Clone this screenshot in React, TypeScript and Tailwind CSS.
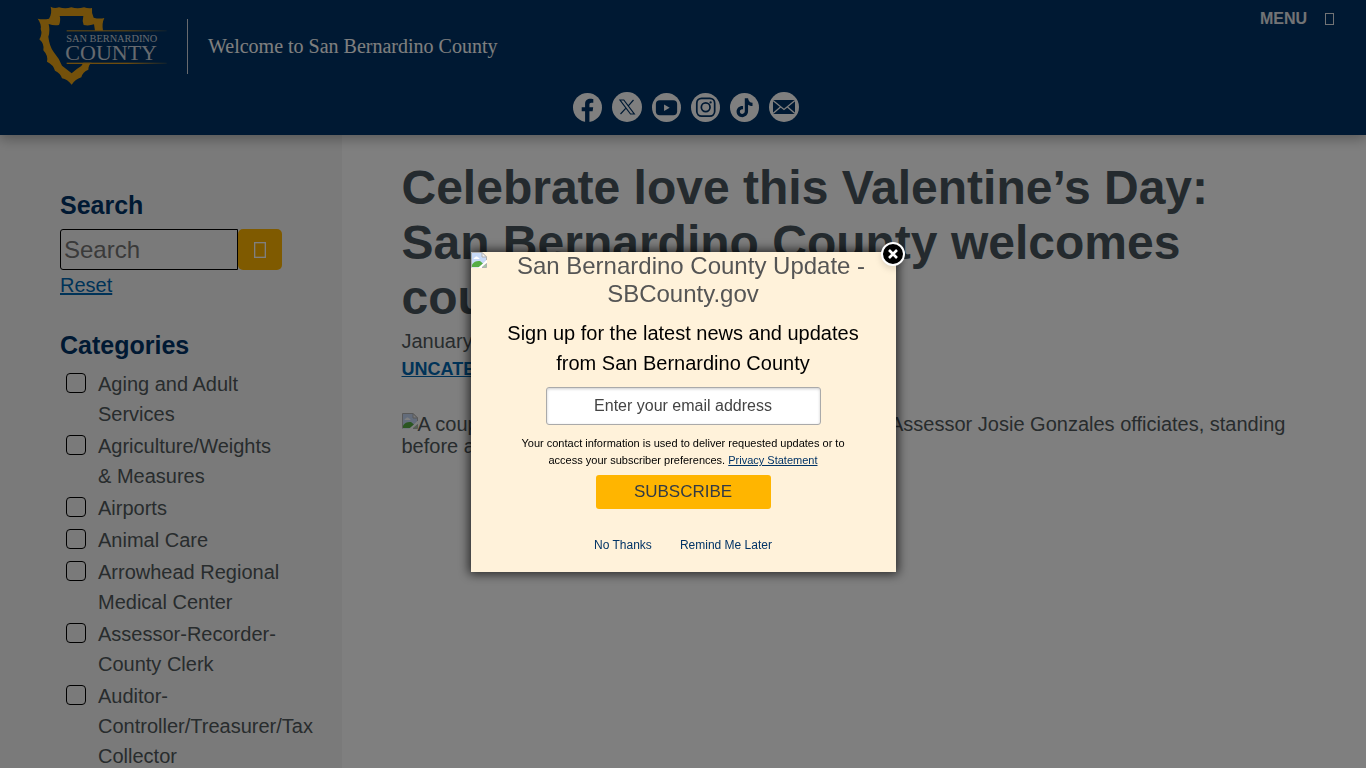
import React, { useState } from "react";

const categories = [
  "Aging and Adult Services",
  "Agriculture/Weights & Measures",
  "Airports",
  "Animal Care",
  "Arrowhead Regional Medical Center",
  "Assessor-Recorder-County Clerk",
  "Auditor-Controller/Treasurer/Tax Collector",
];

function CountyLogo() {
  return (
    <svg viewBox="48 15 396 246" className="w-[132px] h-[82px]" role="img" aria-label="San Bernardino County">
      <defs>
        <linearGradient id="rule" x1="0" x2="1" y1="0" y2="0">
          <stop offset="0.6" stopColor="#dc9a1e" />
          <stop offset="1" stopColor="#dc9a1e" stopOpacity="0.15" />
        </linearGradient>
      </defs>
      <path
        fill="#e8a317"
        d="M92 20Q103 27 117 22Q136 28 154 22Q173 28 192 22Q205 26 216 24Q214 38 221 53Q238 58 253 54Q245 70 249 92H225L222 73Q207 78 191 75Q186 62 190 48H119Q123 60 117 75Q102 78 86 72Q91 92 85 110Q88 138 101 156Q118 176 126 197Q138 206 155 220Q170 206 184 198L190 188H215Q205 194 205 209Q188 215 184 232Q166 238 155 254Q142 238 126 235Q122 220 105 212Q100 194 81 185Q85 167 70 151Q74 132 58 118Q68 102 62 87Q65 72 53 56Q70 59 87 56Q97 40 92 20Z"
      />
      <rect x="140" y="91" width="300" height="3" fill="url(#rule)" />
      <rect x="140" y="188" width="300" height="4" fill="url(#rule)" />
      <text x="139" y="126" fontSize="31" fill="#ccd4de" fontFamily="Liberation Serif, serif">
        SAN BERNARDINO
      </text>
      <text x="136" y="180" fontSize="66" fill="#ccd4de" fontFamily="Liberation Serif, serif">
        COUNTY
      </text>
    </svg>
  );
}

function BrokenImage({ className }: { className?: string }) {
  return (
    <svg viewBox="0 0 16 16" className={className} aria-hidden="true">
      <path d="M0.5 15V0.5H11L15.5 5V8L8 15.5H0.5Z" fill="#c6d9f7" />
      <path d="M2.500 7C2.500 5.500 4 5.500 4 5.500C4.300 4 6.700 4 7 5.500C8.500 5.500 8.500 7 8.500 7Z" fill="#fff" />
      <path d="M1 15V12.500C3 9.500 6 8.500 9 9L12 11.500L8 15Z" fill="#56ad45" />
      <path d="M0.5 15.500V0.5H11L15.500 5V8" fill="none" stroke="#b0b0b0" />
      <path d="M11 0.5V5H15.500Z" fill="#f4f4f4" stroke="#b0b0b0" />
      <path d="M7 16L16 8V11L10.500 16Z" fill="#fff" />
      <path d="M11 15.500H15.500V11.500Z" fill="#9fcf9a" stroke="#b0b0b0" />
    </svg>
  );
}

// box shown where the icon font has no glyph
function MissingGlyph({ className }: { className?: string }) {
  return (
    <svg viewBox="0 0 9 12" className={className} aria-hidden="true">
      <rect x="0.5" y="0.5" width="8" height="11" fill="none" stroke="currentColor" />
    </svg>
  );
}

const socials = [
  {
    name: "Facebook",
    size: "size-[29px]",
    icon: (
      <path
        d="M12.500 30V19H9V14.800H12.500V11.500C12.500 7.500 14.800 6 18 6C19.600 6 21 6.300 21 6.300V10H19.200C17.500 10 17 11 17 12V14.800H20.900L20.300 19H17V30Z"
        fill="#003366"
      />
    ),
  },
  {
    name: "X",
    size: "size-[30px]",
    icon: (
      <path
        d="M8 8H11.800L22.300 22H18.500ZM21.500 8L16.300 13.900M13.700 16.400L8.500 22"
        fill="none"
        stroke="#003366"
        strokeWidth="1.200"
      />
    ),
  },
  {
    name: "YouTube",
    size: "size-[29px]",
    icon: (
      <>
        <rect x="4" y="7.500" width="22" height="15.500" rx="4" fill="#003366" />
        <path d="M12.500 12V18.500L18.300 15.200Z" fill="#fff" />
      </>
    ),
  },
  {
    name: "Instagram",
    size: "size-[29px]",
    icon: (
      <>
        <rect x="6" y="5.500" width="18.500" height="18.500" rx="5" fill="none" stroke="#003366" strokeWidth="1.800" />
        <circle cx="15.200" cy="14.800" r="4.500" fill="none" stroke="#003366" strokeWidth="1.800" />
        <circle cx="20.300" cy="9.700" r="1.200" fill="#003366" />
      </>
    ),
  },
  {
    name: "TikTok",
    size: "size-[29px]",
    icon: (
      <path
        d="M15.300 5.500H18.700C18.900 8.300 20.600 10 23.300 10.200V13.500C21.500 13.500 20 13 18.700 12.100V19C18.700 22.500 16 25 12.700 25C9.300 25 6.800 22.400 6.800 19.200C6.800 15.700 9.900 13 13.500 13.500V17C11.700 16.500 10.200 17.700 10.200 19.200C10.200 20.600 11.300 21.600 12.700 21.600C14.200 21.600 15.300 20.500 15.300 19Z"
        fill="#003366"
      />
    ),
  },
  {
    name: "Email",
    size: "size-[30px]",
    icon: (
      <>
        <rect x="4" y="8" width="22" height="14" fill="#003366" />
        <path d="M4 8.500L15 17.500L26 8.500M4 21.500L11.500 15M26 21.500L18.500 15" fill="none" stroke="#fff" strokeWidth="1.300" />
      </>
    ),
  },
];

function Header() {
  return (
    <header className="relative z-10 bg-[#003366] text-white h-[135px] shadow-[0_4px_12px_rgba(0,0,0,0.3)]">
      <div className="flex justify-between items-start h-[92px] pl-9 pr-8">
        <div className="flex items-center pt-[5px]">
          <a href="#home">
            <CountyLogo />
          </a>
          <div className="ml-[19px] pl-5 h-[55px] flex items-center border-l border-gray-300">
            <p className="font-['Liberation_Serif',serif] text-xl">Welcome to San Bernardino County</p>
          </div>
        </div>
        <button className="flex items-center gap-[18px] pt-[7px] text-base leading-6 font-bold text-gray-200">
          MENU
          <MissingGlyph className="w-[9px] h-3" />
        </button>
      </div>
      <nav className="flex justify-center items-center gap-[10px] h-[30px] pl-[6px]" aria-label="Social media">
        {socials.map((social) => (
          <a key={social.name} href={`#${social.name}`} aria-label={social.name}>
            <svg viewBox="0 0 30 30" className={social.size}>
              <circle cx="15" cy="15" r="15" fill="#fff" />
              {social.icon}
            </svg>
          </a>
        ))}
      </nav>
    </header>
  );
}

function Sidebar() {
  return (
    <aside className="w-1/4 shrink-0 bg-[#f5f5f5] px-[60px] pt-[52px] min-h-screen">
      <label htmlFor="search" className="block text-[25px] leading-9 font-bold text-[#003366]">
        Search
      </label>
      <form className="flex mt-[6px] h-[41px]" onSubmit={(e) => e.preventDefault()}>
        <input
          id="search"
          type="text"
          placeholder="Search"
          className="flex-1 min-w-0 border border-black rounded-l-[3px] px-[3px] text-2xl placeholder:text-[#757575]"
        />
        <button
          aria-label="Submit search"
          className="w-11 rounded-[5px] bg-[#ffb500] text-white flex items-center justify-center"
        >
          <MissingGlyph className="w-3 h-4" />
        </button>
      </form>
      <a href="#reset" className="block w-fit leading-[30px] text-[#0067b1] underline">
        Reset
      </a>

      <h2 className="mt-[27px] text-[25px] leading-9 font-bold text-[#003366]">Categories</h2>
      <ul className="mt-[6px] space-y-[2px]">
        {categories.map((category) => (
          <li key={category}>
            <label className="flex items-start gap-3 pl-[6px] leading-[30px]">
              <input
                type="checkbox"
                className="appearance-none size-5 mt-1 shrink-0 border border-black rounded checked:bg-[#003366]"
              />
              <span className="min-w-0">{category}</span>
            </label>
          </li>
        ))}
      </ul>
    </aside>
  );
}

function Article() {
  return (
    <main className="flex-1 min-w-0 px-[60px] pt-[25px]">
      <h1 className="text-5xl leading-[55px] font-bold text-[#48555c]">
        Celebrate love this Valentine’s Day: San Bernardino County welcomes couples to say I do
      </h1>
      <p className="leading-[30px] mt-px">January 30, 2025</p>
      <a href="#uncategorized" className="block w-fit text-lg leading-[26px] font-bold text-[#0067b1] underline">
        UNCATEGORIZED
      </a>
      <p className="mt-[31px] leading-[22px]">
        <BrokenImage className="inline-block size-4 align-[2px]" />A couple holds hands and smiles, as San Bernardino
        Assessor Josie Gonzales officiates, standing before an arch of red roses.
      </p>
    </main>
  );
}

function SubscribeModal({ onClose }: { onClose: () => void }) {
  return (
    <div className="fixed inset-0 z-20 bg-black/50 flex items-start justify-center pt-[252px]">
      <div
        role="dialog"
        aria-label="Subscribe to updates"
        className="relative w-[425px] bg-[#fff2da] pb-4 text-center text-black shadow-[0_0_10px_2px_rgba(0,0,0,0.7)]"
      >
        <button
          onClick={onClose}
          aria-label="Close"
          className="absolute -top-[11px] -right-[10px] size-[26px] rounded-full"
        >
          <svg viewBox="0 0 26 26" className="size-full drop-shadow-md">
            <circle cx="13" cy="13" r="11" fill="#000" stroke="#fff" strokeWidth="2" />
            <path d="M9 9L17 17M17 9L9 17" stroke="#fff" strokeWidth="2.600" />
          </svg>
        </button>

        <div className="text-2xl leading-7 text-[#555]">
          <BrokenImage className="float-left size-4" />
          San Bernardino County Update - SBCounty.gov
        </div>
        <p className="mt-[10px] px-8 leading-[30px]">
          Sign up for the latest news and updates from San Bernardino County
        </p>
        <input
          type="email"
          aria-label="Email address"
          placeholder="Enter your email address"
          className="block mx-auto mt-[9px] w-[275px] h-[38px] bg-white border border-[#aaa] rounded-[3px] text-base text-center shadow-[inset_0_1px_3px_rgba(0,0,0,0.2)] placeholder:text-[#444]"
        />
        <p className="mt-[10px] px-12 text-[11px] leading-[17px]">
          Your contact information is used to deliver requested updates or to access your subscriber preferences.{" "}
          <a href="#privacy" className="text-[#003366] underline">
            Privacy Statement
          </a>
        </p>
        <button className="mt-[6px] w-[175px] h-[34px] rounded-[3px] bg-[#ffb500] text-[17px] leading-6 text-[#323a45]">
          SUBSCRIBE
        </button>
        <div className="flex justify-center gap-7 mt-[25px] text-xs leading-[22px] text-[#003366]">
          <button onClick={onClose}>No Thanks</button>
          <button onClick={onClose}>Remind Me Later</button>
        </div>
      </div>
    </div>
  );
}

function App() {
  const [showModal, setShowModal] = useState(true);

  return (
    <div className="h-screen overflow-hidden bg-white font-['Liberation_Sans',Arial,sans-serif] text-xl text-[#50585b]">
      <Header />
      <div className="flex">
        <Sidebar />
        <Article />
      </div>
      {showModal && <SubscribeModal onClose={() => setShowModal(false)} />}
    </div>
  );
}

export default App;
